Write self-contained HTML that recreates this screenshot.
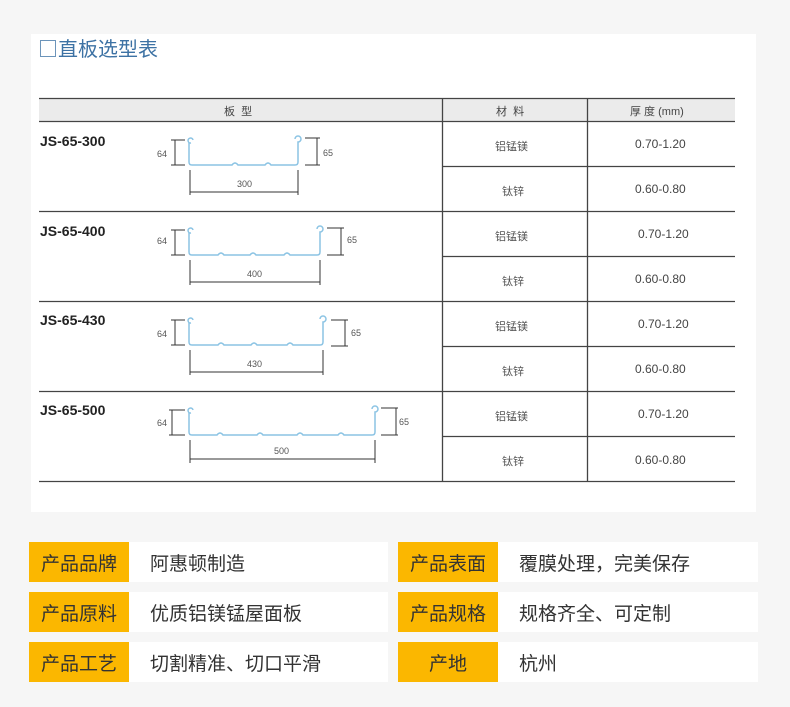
<!DOCTYPE html>
<html><head><meta charset="utf-8"><style>
body{margin:0;width:790px;height:707px;background:#f6f6f6;position:relative;overflow:hidden;font-family:"Liberation Sans","Noto Sans CJK SC",sans-serif}
.panel{position:absolute;left:31px;top:34px;width:725px;height:478px;background:#fff}
.t{position:absolute;white-space:nowrap}
.lab{position:absolute;height:40px;width:100px;background:#fbb700;color:#333;font-size:19px;line-height:46px;text-align:center;overflow:hidden}
.val{position:absolute;height:40px;background:#fff;color:#333;font-size:19px;line-height:46px;padding-left:21px;box-sizing:border-box;overflow:hidden}
</style></head><body>
<div class="panel"></div>
<div class="t" style="left:38px;top:36px;font-size:20px;color:#3d72a4;font-family:'Noto Sans CJK SC',sans-serif;line-height:24px">□直板选型表</div>
<svg width="790" height="707" style="position:absolute;left:0;top:0">
<rect x="39" y="99" width="696" height="22" fill="#ebebeb"/>
<g stroke="#444" stroke-width="1.3">
<line x1="39" y1="98.5" x2="735" y2="98.5"/>
<line x1="39" y1="121.5" x2="735" y2="121.5"/>
<line x1="39" y1="211.5" x2="735" y2="211.5"/>
<line x1="39" y1="301.5" x2="735" y2="301.5"/>
<line x1="39" y1="391.5" x2="735" y2="391.5"/>
<line x1="39" y1="481.5" x2="735" y2="481.5"/>
<line x1="442" y1="166.5" x2="735" y2="166.5"/>
<line x1="442" y1="256.5" x2="735" y2="256.5"/>
<line x1="442" y1="346.5" x2="735" y2="346.5"/>
<line x1="442" y1="436.5" x2="735" y2="436.5"/>
<line x1="442.5" y1="98" x2="442.5" y2="482"/>
<line x1="587.5" y1="98" x2="587.5" y2="482"/>
</g>
<g font-size="9" fill="#555" font-family="Liberation Sans,sans-serif">
<g transform="translate(0,0)">
<path d="M191,143 a2.5,2.5 0 1 1 2,-3 M189,143 V162 q0,3 3,3 H232 q3,-4 6,0 H265 q3,-4 6,0 H295 q3,0 3,-3 V142 a3,3 0 1 0 -3,-3" fill="none" stroke="#8cc4e4" stroke-width="1.5"/>
<g stroke="#333" stroke-width="1"><line x1="171" y1="140" x2="185" y2="140"/><line x1="171" y1="165" x2="185" y2="165"/><line x1="175" y1="140" x2="175" y2="165"/>
<line x1="305" y1="138" x2="320" y2="138"/><line x1="305" y1="165" x2="320" y2="165"/><line x1="317" y1="138" x2="317" y2="165"/>
<line x1="190" y1="192" x2="298" y2="192"/><line x1="190" y1="170" x2="190" y2="195"/><line x1="298" y1="170" x2="298" y2="195"/></g>
<text x="157" y="157">64</text><text x="323" y="156">65</text><text x="237" y="187">300</text></g>
<g transform="translate(0,90)">
<path d="M191,143 a2.5,2.5 0 1 1 2,-3 M189,143 V162 q0,3 3,3 H218 q3,-4 6,0 H250 q3,-4 6,0 H284 q3,-4 6,0 H317 q3,0 3,-3 V142 a3,3 0 1 0 -3,-3" fill="none" stroke="#8cc4e4" stroke-width="1.5"/>
<g stroke="#333" stroke-width="1"><line x1="171" y1="140" x2="185" y2="140"/><line x1="171" y1="165" x2="185" y2="165"/><line x1="175" y1="140" x2="175" y2="165"/>
<line x1="327" y1="138" x2="344" y2="138"/><line x1="327" y1="165" x2="344" y2="165"/><line x1="341" y1="138" x2="341" y2="165"/>
<line x1="190" y1="192" x2="320" y2="192"/><line x1="190" y1="170" x2="190" y2="195"/><line x1="320" y1="170" x2="320" y2="195"/></g>
<text x="157" y="154">64</text><text x="347" y="153">65</text><text x="247" y="187">400</text></g>
<g transform="translate(0,180)">
<path d="M191,143 a2.5,2.5 0 1 1 2,-3 M189,143 V162 q0,3 3,3 H218 q3,-4 6,0 H251 q3,-4 6,0 H287 q3,-4 6,0 H320 q3,0 3,-3 V142 a3,3 0 1 0 -3,-3" fill="none" stroke="#8cc4e4" stroke-width="1.5"/>
<g stroke="#333" stroke-width="1"><line x1="171" y1="140" x2="185" y2="140"/><line x1="171" y1="165" x2="185" y2="165"/><line x1="175" y1="140" x2="175" y2="165"/>
<line x1="331" y1="140" x2="348" y2="140"/><line x1="331" y1="166" x2="348" y2="166"/><line x1="345" y1="140" x2="345" y2="166"/>
<line x1="190" y1="192" x2="323" y2="192"/><line x1="190" y1="170" x2="190" y2="195"/><line x1="323" y1="170" x2="323" y2="195"/></g>
<text x="157" y="157">64</text><text x="351" y="156">65</text><text x="247" y="187">430</text></g>
<g transform="translate(0,270)">
<path d="M191,143 a2.5,2.5 0 1 1 2,-3 M189,143 V162 q0,3 3,3 H217 q3,-4 6,0 H257 q3,-4 6,0 H297 q3,-4 6,0 H338 q3,-4 6,0 H372 q3,0 3,-3 V142 a3,3 0 1 0 -3,-3" fill="none" stroke="#8cc4e4" stroke-width="1.5"/>
<g stroke="#333" stroke-width="1"><line x1="169" y1="140" x2="185" y2="140"/><line x1="169" y1="165" x2="185" y2="165"/><line x1="172" y1="140" x2="172" y2="165"/>
<line x1="381" y1="138" x2="398" y2="138"/><line x1="381" y1="165" x2="398" y2="165"/><line x1="396" y1="138" x2="396" y2="165"/>
<line x1="190" y1="189" x2="375" y2="189"/><line x1="190" y1="170" x2="190" y2="193"/><line x1="375" y1="170" x2="375" y2="193"/></g>
<text x="157" y="156">64</text><text x="399" y="155">65</text><text x="274" y="184">500</text></g>
</g>
</svg>
<div class="t" style="left:224px;top:103px;font-size:11px;color:#444">板 &nbsp;型</div>
<div class="t" style="left:496px;top:103px;font-size:11px;color:#444">材 &nbsp;料</div>
<div class="t" style="left:630px;top:103px;font-size:11px;color:#444">厚 度 (mm)</div>
<div class="t" style="left:40px;top:133px;font-size:14px;font-weight:bold;color:#222">JS-65-300</div>
<div class="t" style="left:40px;top:223px;font-size:14px;font-weight:bold;color:#222">JS-65-400</div>
<div class="t" style="left:40px;top:312px;font-size:14px;font-weight:bold;color:#222">JS-65-430</div>
<div class="t" style="left:40px;top:402px;font-size:14px;font-weight:bold;color:#222">JS-65-500</div>
<div class="t" style="left:495px;top:138px;font-size:11px;color:#555">铝锰镁</div>
<div class="t" style="left:502px;top:183px;font-size:11px;color:#555">钛锌</div>
<div class="t" style="left:495px;top:228px;font-size:11px;color:#555">铝锰镁</div>
<div class="t" style="left:502px;top:273px;font-size:11px;color:#555">钛锌</div>
<div class="t" style="left:495px;top:318px;font-size:11px;color:#555">铝锰镁</div>
<div class="t" style="left:502px;top:363px;font-size:11px;color:#555">钛锌</div>
<div class="t" style="left:495px;top:408px;font-size:11px;color:#555">铝锰镁</div>
<div class="t" style="left:502px;top:453px;font-size:11px;color:#555">钛锌</div>
<div class="t" style="left:635px;top:137px;font-size:12px;color:#444">0.70-1.20</div>
<div class="t" style="left:635px;top:182px;font-size:12px;color:#444">0.60-0.80</div>
<div class="t" style="left:638px;top:227px;font-size:12px;color:#444">0.70-1.20</div>
<div class="t" style="left:635px;top:272px;font-size:12px;color:#444">0.60-0.80</div>
<div class="t" style="left:638px;top:317px;font-size:12px;color:#444">0.70-1.20</div>
<div class="t" style="left:635px;top:362px;font-size:12px;color:#444">0.60-0.80</div>
<div class="t" style="left:638px;top:407px;font-size:12px;color:#444">0.70-1.20</div>
<div class="t" style="left:635px;top:453px;font-size:12px;color:#444">0.60-0.80</div>

<div class="lab" style="left:29px;top:542px">产品品牌</div><div class="val" style="left:129px;top:542px;width:259px">阿惠顿制造</div>
<div class="lab" style="left:398px;top:542px">产品表面</div><div class="val" style="left:498px;top:542px;width:260px">覆膜处理，完美保存</div>
<div class="lab" style="left:29px;top:592px">产品原料</div><div class="val" style="left:129px;top:592px;width:259px">优质铝镁锰屋面板</div>
<div class="lab" style="left:398px;top:592px">产品规格</div><div class="val" style="left:498px;top:592px;width:260px">规格齐全、可定制</div>
<div class="lab" style="left:29px;top:642px">产品工艺</div><div class="val" style="left:129px;top:642px;width:259px">切割精准、切口平滑</div>
<div class="lab" style="left:398px;top:642px">产地</div><div class="val" style="left:498px;top:642px;width:260px">杭州</div>
</body></html>
